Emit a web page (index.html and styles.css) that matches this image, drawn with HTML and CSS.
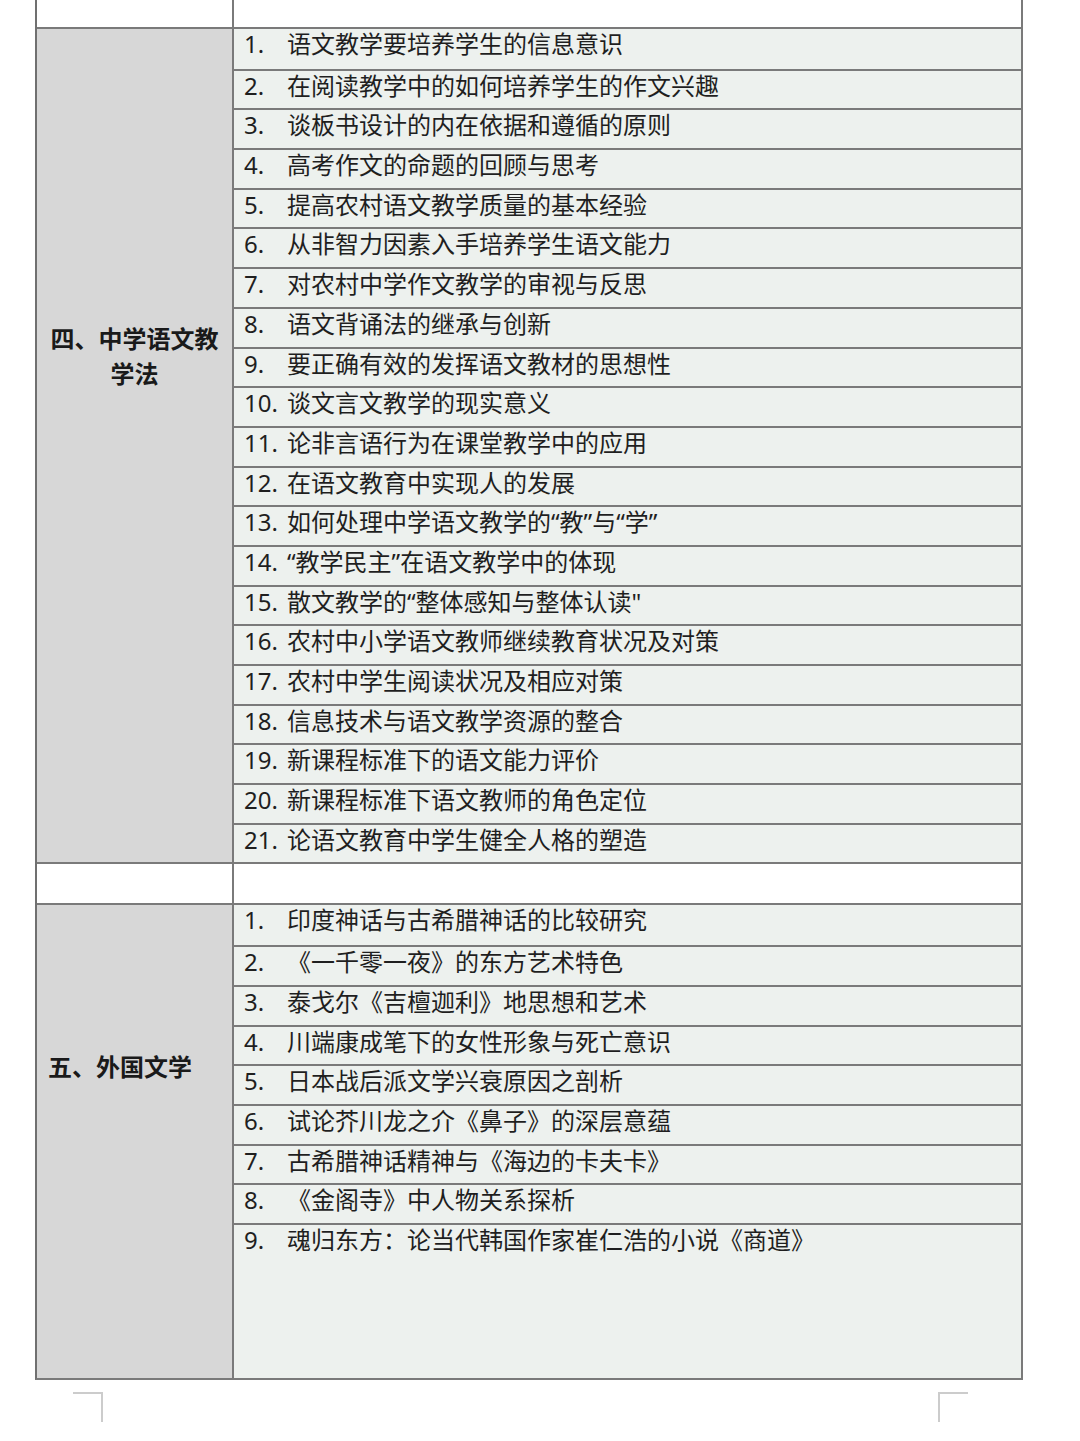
FILE: index.html
```html
<!DOCTYPE html>
<html lang="zh-CN">
<head>
<meta charset="utf-8">
<title>论文选题</title>
<link rel="stylesheet" href="styles.css">
</head>
<body>
<div class="sheet">
  <div class="row blank top"><div class="cat"></div><div class="cell"></div></div>

  <div class="section s4">
    <div class="cat"><span>四、中学语文教学法</span></div>
    <div class="items">
      <div class="item"><span class="num">1.</span><span class="txt">语文教学要培养学生的信息意识</span></div>
      <div class="item"><span class="num">2.</span><span class="txt">在阅读教学中的如何培养学生的作文兴趣</span></div>
      <div class="item"><span class="num">3.</span><span class="txt">谈板书设计的内在依据和遵循的原则</span></div>
      <div class="item"><span class="num">4.</span><span class="txt">高考作文的命题的回顾与思考</span></div>
      <div class="item"><span class="num">5.</span><span class="txt">提高农村语文教学质量的基本经验</span></div>
      <div class="item"><span class="num">6.</span><span class="txt">从非智力因素入手培养学生语文能力</span></div>
      <div class="item"><span class="num">7.</span><span class="txt">对农村中学作文教学的审视与反思</span></div>
      <div class="item"><span class="num">8.</span><span class="txt">语文背诵法的继承与创新</span></div>
      <div class="item"><span class="num">9.</span><span class="txt">要正确有效的发挥语文教材的思想性</span></div>
      <div class="item"><span class="num">10.</span><span class="txt">谈文言文教学的现实意义</span></div>
      <div class="item"><span class="num">11.</span><span class="txt">论非言语行为在课堂教学中的应用</span></div>
      <div class="item"><span class="num">12.</span><span class="txt">在语文教育中实现人的发展</span></div>
      <div class="item"><span class="num">13.</span><span class="txt">如何处理中学语文教学的“教”与“学”</span></div>
      <div class="item"><span class="num">14.</span><span class="txt">“教学民主”在语文教学中的体现</span></div>
      <div class="item"><span class="num">15.</span><span class="txt">散文教学的“整体感知与整体认读"</span></div>
      <div class="item"><span class="num">16.</span><span class="txt">农村中小学语文教师继续教育状况及对策</span></div>
      <div class="item"><span class="num">17.</span><span class="txt">农村中学生阅读状况及相应对策</span></div>
      <div class="item"><span class="num">18.</span><span class="txt">信息技术与语文教学资源的整合</span></div>
      <div class="item"><span class="num">19.</span><span class="txt">新课程标准下的语文能力评价</span></div>
      <div class="item"><span class="num">20.</span><span class="txt">新课程标准下语文教师的角色定位</span></div>
      <div class="item"><span class="num">21.</span><span class="txt">论语文教育中学生健全人格的塑造</span></div>
    </div>
  </div>

  <div class="row blank mid"><div class="cat"></div><div class="cell"></div></div>

  <div class="section s5">
    <div class="cat"><span>五、外国文学</span></div>
    <div class="items">
      <div class="item"><span class="num">1.</span><span class="txt">印度神话与古希腊神话的比较研究</span></div>
      <div class="item"><span class="num">2.</span><span class="txt">《一千零一夜》的东方艺术特色</span></div>
      <div class="item"><span class="num">3.</span><span class="txt">泰戈尔《吉檀迦利》地思想和艺术</span></div>
      <div class="item"><span class="num">4.</span><span class="txt">川端康成笔下的女性形象与死亡意识</span></div>
      <div class="item"><span class="num">5.</span><span class="txt">日本战后派文学兴衰原因之剖析</span></div>
      <div class="item"><span class="num">6.</span><span class="txt">试论芥川龙之介《鼻子》的深层意蕴</span></div>
      <div class="item"><span class="num">7.</span><span class="txt">古希腊神话精神与《海边的卡夫卡》</span></div>
      <div class="item"><span class="num">8.</span><span class="txt">《金阁寺》中人物关系探析</span></div>
      <div class="item last"><span class="num">9.</span><span class="txt">魂归东方：论当代韩国作家崔仁浩的小说《商道》</span></div>
    </div>
  </div>
</div>
<div class="marks">
  <div class="mark left"></div>
  <div class="mark right"></div>
</div>
</body>
</html>
```
FILE: styles.css
```css
html, body {
  margin: 0;
  padding: 0;
  background: #ffffff;
}
body {
  font-family: "Noto Sans CJK SC", "Noto Sans", sans-serif;
  color: #1f1f1f;
  width: 1080px;
  height: 1441px;
  overflow: hidden;
}
.sheet {
  box-sizing: border-box;
  width: 988px;
  margin-left: 35px;
  border-left: 2px solid #707070;
  border-right: 2px solid #7a7a7a;
  border-bottom: 2px solid #7a7a7a;
}
.row, .section {
  display: grid;
  grid-template-columns: 197px 1fr;
}
.cat {
  border-right: 2px solid #7a7a7a;
}
.blank .cat, .blank .cell {
  background: #ffffff;
}
.top {
  height: 27px;
}
.mid {
  box-sizing: border-box;
  height: 41px;
  border-top: 2px solid #7a7a7a;
}
.section {
  border-top: 2px solid #7a7a7a;
}
.section .cat {
  background: #d7d7d7;
  font-weight: 700;
  font-size: 24px;
  line-height: 35px;
  color: #1a1a1a;
}
.s4 .cat {
  padding: 291px 4px 0;
  text-align: center;
}
.s5 .cat {
  padding: 143px 8px 0 11px;
  text-align: left;
}
.items {
  background: #edf1ee;
}
.item {
  box-sizing: border-box;
  height: 39.7px;
  display: flex;
  align-items: flex-start;
  padding-left: 10px;
  font-family: "Noto Sans", "Noto Sans CJK SC", sans-serif;
  font-size: 24px;
  line-height: 30px;
}
.item + .item {
  border-top: 2px solid #7a7a7a;
}
.item.last {
  height: 155px;
}
.num {
  width: 43px;
  flex: none;
}
.marks {
  display: flex;
  justify-content: space-between;
  padding-top: 12px;
  width: 968px;
  margin-left: 73px;
  box-sizing: border-box;
}
.mark {
  width: 30px;
  height: 30px;
  box-sizing: border-box;
  border-top: 2px solid #cccccc;
}
.mark.left {
  border-right: 2px solid #cccccc;
}
.mark.right {
  border-left: 2px solid #cccccc;
  margin-right: 73px;
}
```
